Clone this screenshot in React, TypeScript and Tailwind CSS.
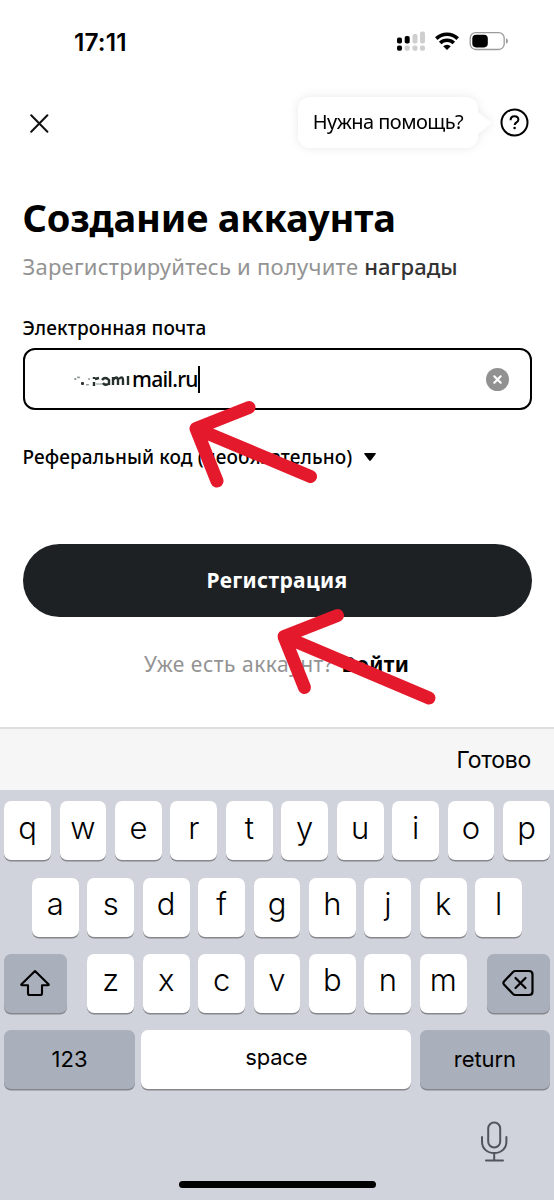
import React from "react";

const letterKey =
  "flex h-[59px] w-[46.8px] shrink-0 items-center justify-center rounded-[7px] bg-white shadow-[0_1.5px_0_#85878c]";
const grayKey =
  "flex h-[59px] shrink-0 items-center justify-center rounded-[7px] bg-[#a9afbb] shadow-[0_1.5px_0_#85878c]";

function LetterRow({ letters }: { letters: string }) {
  return (
    <div className="flex gap-[8.65px]">
      {letters.split("").map((l) => (
        <button key={l} className={letterKey}>
          <span className="-mt-[6px] text-[31px] leading-[36px] font-[360]">{l}</span>
        </button>
      ))}
    </div>
  );
}

function StatusBar() {
  return (
    <header className="flex h-[82px] items-center justify-between pr-[46px] pl-[74px]">
      <span className="mt-[1px] font-['Inter',sans-serif] text-[24.5px] leading-[28px] font-semibold tracking-[0.1px]">17:11</span>
      <svg width="112" height="24" viewBox="396 29 112 24">
        <g>
          <rect x="397" y="37.5" width="5" height="6" rx="1.8" />
          <rect x="404.700" y="36" width="5" height="7.500" rx="1.8" />
          <rect x="397" y="45.500" width="5" height="5.300" rx="1.800" />
          <g fill="#cfcfcf">
            <rect x="412.500" y="34" width="5" height="9.500" rx="1.800" />
            <rect x="420" y="31.500" width="5" height="12" rx="1.800" />
            <rect x="404.700" y="45.500" width="5" height="5.300" rx="1.800" />
            <rect x="412.500" y="45.500" width="5" height="5.300" rx="1.800" />
            <rect x="420" y="45.500" width="5" height="5.300" rx="1.800" />
          </g>
        </g>
        <g fill="none" stroke="#000" strokeWidth="3.600">
          <path d="M436.300 38.600a15.200 15.200 0 0 1 21.400 0" />
          <path d="M440.200 43a9.700 9.700 0 0 1 13.600 0" />
        </g>
        <path d="M443.200 46.200a5.400 5.400 0 0 1 7.600 0L447 50Z" />
        <rect x="470.200" y="32.700" width="34" height="16.800" rx="5.500" fill="none" stroke="#9b9b9b" strokeWidth="1.300" />
        <rect x="472.300" y="34.800" width="15.500" height="12.600" rx="3.800" />
        <path d="M506 38.200q2 .7 2 2.800t-2 2.800Z" fill="#9b9b9b" />
      </svg>
    </header>
  );
}

function Arrow({ className, barb }: { className: string; barb: string }) {
  return (
    <svg className={className} width="170" height="110" viewBox="0 0 170 110" fill="none" stroke="#e5192c" strokeWidth="13" strokeLinecap="round" strokeLinejoin="round">
      <path d={barb} />
    </svg>
  );
}

export default function App() {
  return (
    <div className="relative flex h-[1200px] w-[554px] flex-col overflow-hidden bg-white font-['Noto_Sans',sans-serif] text-black">
      <StatusBar />

      <div className="flex h-[81px] items-center justify-between pr-[25px] pl-[29px]">
        <svg width="20" height="20" viewBox="0 0 20 20" className="mt-[1px]" fill="none" stroke="#111" strokeWidth="2" strokeLinecap="round">
          <path d="m2.200 2.200 16.200 16.600M18.400 2.200 2.200 18.800" />
        </svg>
        <div className="flex items-center">
          <div className="flex items-center drop-shadow-[0_0_5px_rgba(0,0,0,0.09)]">
            <div className="flex h-[51px] w-[180px] items-center justify-center rounded-[12px] bg-white">
              <span className="-mt-[1px] text-[20px] leading-[26px] tracking-[-0.55px] whitespace-nowrap">Нужна помощь?</span>
            </div>
            <svg width="13" height="22" viewBox="0 0 13 22" fill="#fff"><path d="M0 0 12 9.500q1.500 1.500 0 3L0 22Z" /></svg>
          </div>
          <svg className="ml-[9px]" width="29" height="29" viewBox="0 0 29 29" fill="none" stroke="#000" strokeWidth="2">
            <circle cx="14.500" cy="14.500" r="13" />
            <path d="M10.600 12.200c0-2.400 1.600-4 3.900-4s3.900 1.400 3.900 3.500c0 2.700-3.700 2.700-3.700 5.200" />
            <circle cx="14.600" cy="20" r="1.300" fill="#000" stroke="none" />
          </svg>
        </div>
      </div>

      <main className="flex h-[564px] flex-col px-[22.500px] pt-[28px]">
        <h1 className="h-[52px] text-[38px] leading-[52px] font-bold tracking-[-0.2px] whitespace-nowrap"><span>Создание аккаунта</span></h1>
        <p className="mt-[8px] h-[30px] text-[22px] leading-[30px] tracking-[0.25px] whitespace-nowrap text-[#939393]">
          <span>Зарегистрируйтесь и получите</span> <span className="font-medium tracking-[0.05px] text-[#333]">награды</span>
        </p>
        <label className="mt-[34px] h-[26px] text-[19px] leading-[26px] font-medium tracking-[0.12px] whitespace-nowrap"><span>Электронная почта</span></label>
        <div className="mt-[7px] flex h-[62px] items-center rounded-[12px] border-2 border-black pr-[21px] pl-[48px]">
          <svg width="61" height="20" viewBox="73 369 61 20">
            <g fill="#8f9b96">
              <rect x="74" y="378" width="2.500" height="2" rx="1" />
              <rect x="77" y="376.500" width="3" height="1.800" rx=".9" />
              <rect x="81" y="382" width="3" height="3" rx="1" fill="#333" />
              <rect x="88" y="378" width="2" height="2" rx="1" />
              <rect x="86" y="384" width="3" height="1.500" rx=".7" />
              <path d="M96 383h11v2H96Z" fill="#c4cfc9" />
            </g>
            <g fill="none" stroke="#26312d" strokeWidth="2">
              <path d="M94 377v2m0 3v4m1-7 4-1M102 380q3-4 7 0v5M103 383q2 3 5 1M113 377v8m0-5q4-5 5 0v5m1-6q4-4 4 2v4M128 376v9" strokeWidth="2.400" />
            </g>
          </svg>
          <span className="-ml-[1.500px] text-[21px] leading-[28px] font-medium tracking-[-0.75px] whitespace-nowrap">mail.ru</span>
          <span className="h-[27px] w-[2.500px] bg-black" />
          <svg className="ml-auto" width="23" height="23" viewBox="0 0 23 23">
            <circle cx="11.500" cy="11.500" r="11.500" fill="#919191" />
            <path d="m8.300 8.300 6.400 6.400m0-6.400-6.400 6.400" stroke="#fff" strokeWidth="2.200" strokeLinecap="round" />
          </svg>
        </div>
        <div className="mt-[34px] flex h-[26px] items-center gap-[12px] text-[19px] leading-[26px] font-medium tracking-[0.1px] whitespace-nowrap">
          <span>Реферальный код (необязательно)</span>
          <svg width="12" height="8" viewBox="0 0 12 8"><path d="M.8 0h10.400q1.200 0 .5 1L6.800 7.400q-.8.900-1.600 0L.3 1Q-.4 0 .8 0Z" /></svg>
        </div>
        <button className="mt-[74px] flex h-[73px] shrink-0 items-center justify-center rounded-full bg-[#1e2124] text-[21px] leading-[30px] font-bold tracking-[0.35px] text-white">
          <span className="-mt-[2px]">Регистрация</span>
        </button>
        <p className="mt-[32px] h-[30px] pl-[121.500px] text-[21px] leading-[30px] tracking-[0.5px] whitespace-nowrap text-[#939393]">
          <span>Уже есть аккаунт?</span> <span className="ml-[2px] font-bold tracking-[0.4px] text-black">Войти</span>
        </p>
      </main>

      <section className="flex h-[473px] flex-col bg-[#d0d3db] font-['Inter',sans-serif]">
        <div className="flex h-[63px] items-center justify-end border-t-2 border-[#dedede] bg-[#f6f6f6] pr-[23px]">
          <span className="text-[23px] leading-[30px] tracking-[-0.3px]">Готово</span>
        </div>
        <div className="flex flex-col items-center gap-[17.200px] pt-[11.400px]">
          <LetterRow letters="qwertyuiop" />
          <LetterRow letters="asdfghjkl" />
          <div className="flex gap-[20.400px]">
            <button className={grayKey + " w-[62.500px]"}>
              <svg className="-ml-[2px]" width="32" height="28" viewBox="0 0 32 28" fill="none" stroke="#000" strokeWidth="2.100" strokeLinejoin="round">
                <path d="M16 2 29.500 15.200q.7 1-.6 1H23v8q0 1.800-1.800 1.800H10.800Q9 26 9 24.200v-8H3.100q-1.300 0-.6-1Z" />
              </svg>
            </button>
            <LetterRow letters="zxcvbnm" />
            <button className={grayKey + " w-[62.500px]"}>
              <svg width="32" height="28" viewBox="0 0 32 28" fill="none" stroke="#000" strokeWidth="2.200" strokeLinejoin="round" strokeLinecap="round">
                <path d="M13.500 2H27q3.500 0 3.500 3.500v17Q30.500 26 27 26H13.500q-1.500 0-2.500-1L2 15.500q-1.200-1.500 0-3L11 3q1-1 2.500-1Z" />
                <path d="m13.500 9 10 10m0-10-10 10" />
              </svg>
            </button>
          </div>
          <div className="flex w-[545.300px]">
            <button className={grayKey + " w-[130.500px]"}><span className="text-[22px]">123</span></button>
            <button className="ml-[6.500px] flex h-[59px] w-[270px] items-center justify-center rounded-[7px] bg-white shadow-[0_1.500px_0_#85878c]">
              <span className="-mt-[4px] text-[22px] tracking-[-0.2px]">space</span>
            </button>
            <button className={grayKey + " ml-auto w-[129.600px]"}><span className="text-[22px] tracking-[-0.1px]">return</span></button>
          </div>
        </div>
        <div className="mt-[32px] flex h-[42px] justify-end pr-[46.500px]">
          <svg width="28" height="42" viewBox="0 0 28 42" fill="none" stroke="#50545c" strokeWidth="2" strokeLinecap="round">
            <rect x="8.200" y="1.500" width="12" height="25" rx="6" />
            <path d="M2 16v4.500c0 7 5 11.500 12.200 11.500s12.200-4.500 12.200-11.500V16M14.200 32v7.500M6 39.500h17" />
          </svg>
        </div>
        <div className="mt-[18.500px] ml-[178.500px] h-[7px] w-[197.500px] rounded-full bg-black" />
      </section>

      <Arrow className="absolute top-[390px] left-[180px]" barb="M69 17.500 16 38.500 37 91M16 38.500 130.500 86.500" />
      <Arrow className="absolute top-[598px] left-[268px]" barb="M69.500 17.500 16 38.500 36.500 89.500M16 38.500 161 100" />
    </div>
  );
}
